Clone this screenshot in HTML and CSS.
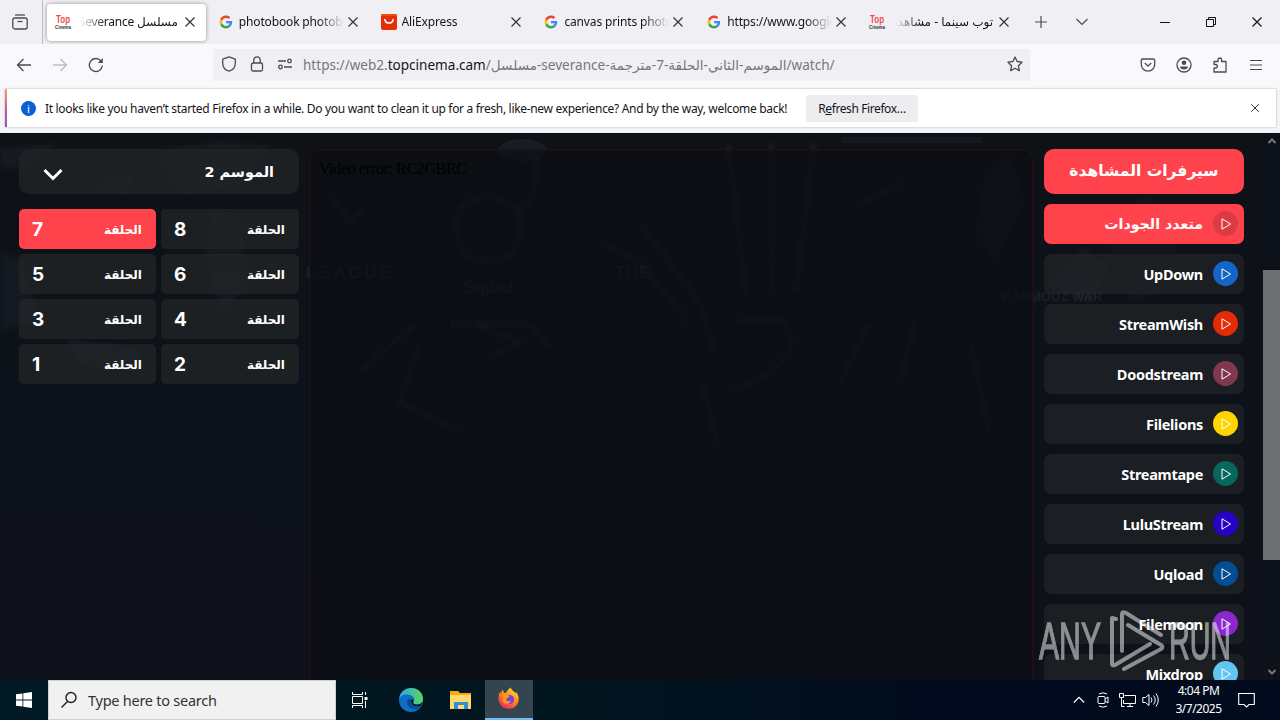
FILE: index.html
```html
<!DOCTYPE html>
<html lang="en">
<head>
    <meta charset="UTF-8">
    <meta name="viewport" content="width=device-width, initial-scale=1.0">
    <title>Top Cinema</title>
    <link rel="stylesheet" href="styles.css">
</head>
<body>

<!-- Shared icons -->
<svg class="sprite">
    <symbol id="close" viewBox="0 0 12 12"><path d="M1.5 1.5l9 9M10.5 1.5l-9 9" fill="none" stroke="currentColor" stroke-width="1.2"/></symbol>
    <symbol id="google" viewBox="0 0 48 48">
        <path fill="#4285f4" d="M45 24.5c0-1.6-.1-2.8-.4-4.1H24v7.5h12c-.2 2-1.500 5-4.500 7l6.800 5.300C42.500 36.500 45 31.100 45 24.500z"/>
        <path fill="#34a853" d="M24 46c5.900 0 10.900-2 14.500-5.300L31.600 35.300c-1.900 1.300-4.300 2.200-7.600 2.200-5.800 0-10.700-3.800-12.500-9.100l-7.100 5.500C8 41 15.400 46 24 46z"/>
        <path fill="#fbbc05" d="M11.500 28.400c-.5-1.400-.7-2.900-.7-4.400s.3-3 .7-4.400l-7.100-5.500C2.900 17 2 20.400 2 24s.9 7 2.400 9.900z"/>
        <path fill="#ea4335" d="M24 10.500c4.100 0 6.900 1.800 8.500 3.300l6.200-6C34.900 4.200 29.900 2 24 2 15.400 2 8 7 4.400 14.100l7.100 5.500c1.800-5.300 6.700-9.100 12.500-9.100z"/>
    </symbol>
    <symbol id="play" viewBox="0 0 12 12"><path d="M2 .8v10.400L10.500 6z" fill="none" stroke="#fff" stroke-width="1" stroke-linejoin="round"/></symbol>
</svg>

<!-- Tabs -->
<div class="tab-strip">
    <div class="recent">
        <svg width="16" height="16" fill="none" stroke="#4a4a52" stroke-width="1.3"><path d="M3 1h10"/><rect x=".8" y="4" width="14.400" height="11" rx="2"/><path d="M5.500 7.500h5"/></svg>
    </div>
    <div class="tab active">
        <svg class="fav top"><text class="t1" x="1" y="9" textLength="14" lengthAdjust="spacingAndGlyphs">Top</text><text class="t2" x="0" y="15" textLength="16" lengthAdjust="spacingAndGlyphs">Cinema</text></svg>
        <span class="title rtl" dir="rtl"><bdi>مسلسل</bdi> Severance</span>
        <svg class="x"><use href="#close"/></svg>
    </div>
    <div class="tab">
        <svg class="fav g"><use href="#google"/></svg>
        <span class="title">photobook photobook</span>
        <svg class="x"><use href="#close"/></svg>
    </div>
    <div class="tab">
        <svg class="fav" viewBox="0 0 16 16"><rect width="16" height="16" rx="2" fill="#e62e04"/><path d="M0 2q0-2 2-2h12q2 0 2 2z" fill="#f24a0a"/><path d="M3.800 5.500c1 4.800 7.400 4.800 8.400 0" fill="none" stroke="#fff" stroke-width="1.500" stroke-linecap="round"/></svg>
        <span class="title">AliExpress</span>
        <svg class="x"><use href="#close"/></svg>
    </div>
    <div class="tab">
        <svg class="fav g"><use href="#google"/></svg>
        <span class="title">canvas prints photobook</span>
        <svg class="x"><use href="#close"/></svg>
    </div>
    <div class="tab">
        <svg class="fav g"><use href="#google"/></svg>
        <span class="title">https://www.google.com</span>
        <svg class="x"><use href="#close"/></svg>
    </div>
    <div class="tab">
        <svg class="fav top"><text class="t1" x="1" y="9" textLength="14" lengthAdjust="spacingAndGlyphs">Top</text><text class="t2" x="0" y="15" textLength="16" lengthAdjust="spacingAndGlyphs">Cinema</text></svg>
        <span class="title rtl arabic" dir="rtl">توب سينما - مشاهدة</span>
        <svg class="x"><use href="#close"/></svg>
    </div>
    <div class="tab-tools">
        <svg width="14" height="14"><path d="M7 1v12M1 7h12" stroke="#4a4a52" stroke-width="1.200"/></svg>
        <svg width="14" height="14"><path d="M1.500 4l5.500 5.500L12.500 4" fill="none" stroke="#4a4a52" stroke-width="1.200"/></svg>
    </div>
    <div class="window-buttons">
        <svg width="12" height="12"><path d="M1 6.500h10" stroke="#111"/></svg>
        <svg width="12" height="12" fill="none" stroke="#111"><path d="M1.500 3.500h7v7h-7zM3.500 3.500v-2h7v7h-2"/></svg>
        <svg width="12" height="12" class="win-x"><use href="#close"/></svg>
    </div>
</div>

<!-- Toolbar -->
<div class="toolbar">
    <div class="nav-buttons">
        <svg width="16" height="16"><path d="M15 8H1.500M7.500 2l-6 6 6 6" fill="none" stroke="#4a4a52" stroke-width="1.300"/></svg>
        <svg width="16" height="16"><path d="M1 8h13.500M8.500 2l6 6-6 6" fill="none" stroke="#bcbcc2" stroke-width="1.300"/></svg>
        <svg width="16" height="16"><path d="M14.300 8.500A6.500 6.500 0 1 1 12.800 3.800L14 5" fill="none" stroke="#4a4a52" stroke-width="1.300"/><path d="M14.800 1v5H9.800z" fill="#4a4a52"/></svg>
    </div>
    <div class="url-bar">
        <svg width="16" height="16"><path d="M8 .8l6.300 2.400v4C14.300 11 11.500 14 8 15.200 4.500 14 1.700 11 1.700 7.200v-4z" fill="none" stroke="#4a4a52" stroke-width="1.300" stroke-linejoin="round"/></svg>
        <svg width="16" height="16" fill="none" stroke="#4a4a52" stroke-width="1.300"><rect x="2.500" y="7" width="11" height="8" rx="1.500"/><path d="M4.800 7V4a3.200 3.200 0 0 1 6.400 0v3"/></svg>
        <svg width="16" height="16" fill="none" stroke="#4a4a52" stroke-width="1.300"><path d="M1 5h8M7 11h8"/><circle cx="12.500" cy="5" r="1.800"/><circle cx="3.500" cy="11" r="1.800"/></svg>
        <span class="url">https://web2.<b>topcinema.cam</b>/<span class="path">مسلسل-severance-الموسم-الثاني-الحلقة-7-مترجمة/watch/</span></span>
        <svg class="star" width="16" height="16"><path d="M8 1l2.100 4.500 4.900.7-3.600 3.500.9 5L8 12.300l-4.300 2.400.9-5L1 6.200l4.900-.7z" fill="none" stroke="#4a4a52" stroke-width="1.300" stroke-linejoin="round"/></svg>
    </div>
    <div class="tool-icons">
        <svg width="16" height="16" fill="none" stroke="#4a4a52" stroke-width="1.300"><path d="M2.500 2h11a1.200 1.200 0 0 1 1.200 1.200V7.500a6.700 6.700 0 0 1-13.400 0V3.200A1.200 1.200 0 0 1 2.500 2zM4.800 6L8 9.200 11.200 6"/></svg>
        <svg width="16" height="16" fill="none" stroke="#4a4a52" stroke-width="1.300"><circle cx="8" cy="8" r="7"/><circle cx="8" cy="5.800" r="2.300" fill="#4a4a52" stroke="none"/><path d="M4 9.500h8c0 4-8 4-8 0z" fill="#4a4a52" stroke="none"/></svg>
        <svg width="16" height="16"><path d="M2 15V11h1.500c2.500 0 2.500-3.500 0-3.500H2V4.500h4V3c0-2.700 3.600-2.700 3.600 0v1.500H14V15z" fill="none" stroke="#4a4a52" stroke-width="1.300" stroke-linejoin="round"/></svg>
        <svg width="16" height="16"><path d="M2 3.500h12M2 8h12M2 12.500h12" stroke="#4a4a52" stroke-width="1.200"/></svg>
    </div>
</div>

<!-- Notification -->
<div class="notice-wrap">
    <div class="notice">
        <span class="info">i</span>
        <span class="notice-text">It looks like you haven’t started Firefox in a while. Do you want to clean it up for a fresh, like-new experience? And by the way, welcome back!</span>
        <span class="refresh">R<u>e</u>fresh Firefox…</span>
        <svg class="x notice-close"><use href="#close"/></svg>
    </div>
</div>

<!-- Page -->
<div class="page">
    <svg class="backdrop" viewBox="0 0 1263 547">
        <g class="soft" fill="#8590b0" opacity=".06">
            <path d="M0 15l60-5-40 25H0zM160 16l60-8 50 4-30 40-60 10z"/>
            <path d="M0 120l20 5 20 60-40 15zM215 75l25 15 10 60-30 30-15-60zM90 55l45-15-10 22z"/>
            <path d="M985 40l25-20 15 50-30 60-20-30zM1045 150l40-35 25 20-20 35zM65 205l70 10 10 25-65-8z"/>
            <path d="M1100 90l50-30 40 90-60 20z" opacity=".5"/>
        </g>
        <path d="M497 18c5-16 47-16 50 0-4 16-40 12-50 0z" fill="#8590b0" opacity=".09"/>
        <path d="M842 4h140v6H842zM450 187h80v8h-80z" fill="#8590b0" opacity=".06"/>
        <g class="soft" fill="none" stroke="#a4acbc" opacity=".09" stroke-width="4">
            <path d="M728 10l18 150M771 10v150M814 10l-18 150M738 188h45c20 30 0 50-50 70M360 240l55-50M535 25c0 40-2 40-18 55"/>
            <path d="M458 78q30-30 60 0 8 50-30 50-35 0-30-50zM640 90l60 80 15 50M600 110l40 20 50 60M840 250l30-60M900 250l15-60M970 210l20 90M702 250l15 60"/>
            <path d="M475 190l45 20-30 15M530 190l20 25M860 70l40-20M330 60l20 30 15-15M420 210l-20 60 60 30"/>
        </g>
        <g fill="#a8b0c0" opacity=".085" font-family="Liberation Sans" font-weight="700">
            <text x="306" y="145" font-size="17" textLength="85">LEAGUE</text>
            <text x="464" y="160" font-size="16">Squad</text>
            <text x="615" y="146" font-size="18">THE</text>
            <text x="1002" y="168" font-size="13">KARMOUZ WAR</text>
        </g>
    </svg>

    <div class="content">
        <aside class="episodes">
            <div class="season">
                <svg width="20" height="14"><path d="M1.500 2L10 10.500 18.500 2" fill="none" stroke="#fff" stroke-width="3"/></svg>
                <span dir="rtl">الموسم 2</span>
            </div>
            <div class="episode-list">
                <div class="episode current"><b>7</b><span>الحلقة</span></div>
                <div class="episode"><b>8</b><span>الحلقة</span></div>
                <div class="episode"><b>5</b><span>الحلقة</span></div>
                <div class="episode"><b>6</b><span>الحلقة</span></div>
                <div class="episode"><b>3</b><span>الحلقة</span></div>
                <div class="episode"><b>4</b><span>الحلقة</span></div>
                <div class="episode"><b>1</b><span>الحلقة</span></div>
                <div class="episode"><b>2</b><span>الحلقة</span></div>
            </div>
        </aside>

        <main class="player">Video error: RC2GBRC</main>

        <aside class="servers">
            <h2>سيرفرات المشاهدة</h2>
            <div class="server current"><span class="ar">متعدد الجودات</span><i class="dot"><svg><use href="#play"/></svg></i></div>
            <div class="server"><span>UpDown</span><i class="dot updown"><svg><use href="#play"/></svg></i></div>
            <div class="server"><span>StreamWish</span><i class="dot wish"><svg><use href="#play"/></svg></i></div>
            <div class="server"><span>Doodstream</span><i class="dot dood"><svg><use href="#play"/></svg></i></div>
            <div class="server"><span>Filelions</span><i class="dot lions"><svg><use href="#play"/></svg></i></div>
            <div class="server"><span>Streamtape</span><i class="dot tape"><svg><use href="#play"/></svg></i></div>
            <div class="server"><span>LuluStream</span><i class="dot lulu"><svg><use href="#play"/></svg></i></div>
            <div class="server"><span>Uqload</span><i class="dot uqload"><svg><use href="#play"/></svg></i></div>
            <div class="server"><span>Filemoon</span><i class="dot moon"><svg><use href="#play"/></svg></i></div>
            <div class="server"><span>Mixdrop</span><i class="dot mix"><svg><use href="#play"/></svg></i></div>
        </aside>
    </div>

    <div class="scrollbar">
        <svg width="10" height="8"><path d="M1.500 6L5 2.500 8.500 6" fill="none" stroke="#73767a" stroke-width="2"/></svg>
        <div class="thumb"></div>
        <svg width="10" height="8"><path d="M1.500 2L5 5.500 8.500 2" fill="none" stroke="#73767a" stroke-width="2"/></svg>
    </div>
</div>

<!-- Watermark -->
<svg class="watermark" width="194" height="64">
    <g fill="#fff" stroke="#fff" stroke-width="1.300" font-family="Liberation Sans Narrow, Liberation Sans" font-size="51">
        <text x="1" y="50" textLength="62" lengthAdjust="spacingAndGlyphs">ANY</text>
        <text x="131" y="50" textLength="62" lengthAdjust="spacingAndGlyphs">RUN</text>
    </g>
    <g fill="none" stroke="#fff" stroke-width="4" stroke-linejoin="round" stroke-linecap="round">
        <path d="M78 10l-4-1v46q0 2 3 1l35-21"/>
        <path d="M84 42V5q0-3 4-1l35 22M90 16l33 20q3 2 0 4L86 60"/>
    </g>
</svg>

<!-- Taskbar -->
<div class="taskbar">
    <div class="start"><svg width="16" height="16" fill="#fff"><path d="M0 2.300L6.500 1.400v6.100H0zM7.300 1.300L16 0v7.500H7.300zM0 8.400h6.500v6.200L0 13.700zM7.300 8.400H16V16l-8.700-1.300z"/></svg></div>
    <div class="search">
        <svg width="18" height="18"><path d="M1.500 16.500l6-6" stroke="#222" stroke-width="1.500"/><circle cx="11" cy="6.500" r="5" fill="none" stroke="#222" stroke-width="1.400"/></svg>
        <span>Type here to search</span>
    </div>
    <div class="app">
        <svg width="16" height="16" fill="none" stroke="#fff"><path d="M.5 0v2.500h10V0M.5 16v-2.500h10V16M.5 4.500h10v7H.5zM13.500 0v3M13.500 9v7"/><path d="M12.500 5h3v3h-3z" fill="#fff" stroke="none"/></svg>
    </div>
    <div class="app edge">
        <svg width="24" height="24" viewBox="0 0 24 24">
            <defs><linearGradient id="eg"><stop stop-color="#2ba7ea"/><stop offset="1" stop-color="#5bd75a"/></linearGradient></defs>
            <circle cx="12" cy="12" r="12" fill="#0e6fc4"/>
            <path d="M.2 11C1 4 6 0 12 0c7 0 12 5 12 10.500 0 4-3 6-6.500 6-3 0-4-1.500-3-3 2.500-4-2-7-6.500-7C4 6.500 1 8.500.2 11z" fill="url(#eg)"/>
            <path d="M9 11c-3 5 1 11 8 10 2 0 4-2 5-3-4 2-12 1-10-7z" fill="#0b4a94"/>
            <path d="M14.500 13.500c-1 1.500 0 3 3 3 2 0 4-.6 5.300-2L22 18c-5 1.500-11-.5-9.700-6.500 1-.5 2.800.5 2.200 2z" fill="#021b2a"/>
        </svg>
    </div>
    <div class="app">
        <svg width="22" height="20"><path d="M0 1h8l2 2h11v16H0z" fill="#f5a81c"/><path d="M0 5h21v14H0z" fill="#ffd96b"/><path d="M4 12h14v7h-4v-4H8v4H4z" fill="#2f8fd8"/></svg>
    </div>
    <div class="app running">
        <svg width="22" height="24" viewBox="0 0 24 25">
            <defs><linearGradient id="ff" x1=".8" y1="0" x2=".2" y2="1"><stop stop-color="#ffe83a"/><stop offset=".45" stop-color="#ff8a1c"/><stop offset="1" stop-color="#f0205f"/></linearGradient></defs>
            <path d="M14 0c1 4 4 4 5 6l1-1c3 4 3 8 2 11a11 11 0 0 1-21-1C0 10 1 6 3 4v3l2-5 2 4c3 0 3-4 7-6z" fill="url(#ff)"/>
            <circle cx="12.500" cy="13" r="5" fill="#7a42d6"/>
            <path d="M5 8c3-1 5 0 7 1 1 2-3 2-3 4s3 3 5 1c0 4-7 5-9 1z" fill="#ff9a1f"/>
        </svg>
    </div>
    <div class="tray">
        <svg width="12" height="16"><path d="M.8 10.500L6 5.300l5.200 5.200" fill="none" stroke="#fff" stroke-width="1.200"/></svg>
        <svg width="12" height="16" fill="none" stroke="#fff"><rect x="1" y="4.500" width="7" height="7" rx="1"/><path d="M8 7l3-2v6L8 9M2 2q4-2.500 8 0M2 14q4 2.500 8 0"/></svg>
        <svg width="17" height="16" fill="none" stroke="#fff"><path d="M5.500 3.500h11v8h-12V8M8 14.500h6M11 11.500v3M.5 1.500h4v4h-4zM2.500 5.500v9h3"/></svg>
        <svg width="17" height="16" fill="none" stroke="#fff"><path d="M.8 5.500h2.700L7 2.500v11l-3.500-3H.8zM9 5.500q2 2.500 0 5M11.500 3.500q3.500 4.500 0 9M14 1.500q4.500 6.500 0 13"/></svg>
        <div class="clock"><span>4:04 PM</span><span>3/7/2025</span></div>
        <svg width="17" height="16"><path d="M.7 1.500h15.600v11H11l-2.500 2.500L6 12.500H.7z" fill="none" stroke="#fff" stroke-width="1.100"/></svg>
    </div>
</div>

</body>
</html>
```
FILE: styles.css
```css
/* Global Styles */
* {
    box-sizing: border-box;
}

body {
    margin: 0;
    width: 1280px;
    height: 720px;
    overflow: hidden;
    display: flex;
    flex-direction: column;
    font-family: "Noto Sans", "DejaVu Sans", sans-serif;
    font-size: 12px;
    color: #15141a;
    background: #f9f9fb;
}

svg {
    flex: none;
}

.sprite {
    position: absolute;
    width: 0;
    height: 0;
}

/* Tabs */
.tab-strip {
    height: 44px;
    flex: none;
    display: flex;
    align-items: center;
    background: #f0f0f4;
}

.recent {
    width: 43px;
    height: 44px;
    padding: 14px 0 0 12px;
    border-right: 1px solid #bdbdc5;
    margin-right: 4px;
}

.tab {
    width: 159px;
    height: 37px;
    margin-right: 3.8px;
    padding-left: 8px;
    display: flex;
    align-items: center;
    border-radius: 4px;
    flex: none;
}

.tab.active {
    background: #fff;
    box-shadow: 0 0 4px rgba(0, 0, 0, 0.4);
}

.fav {
    width: 16px;
    height: 16px;
}

.fav.g {
    padding: 1px;
}

.fav.top {
    overflow: visible;
    font-family: "Liberation Sans", sans-serif;
    font-weight: 700;
}

.t1 {
    font-size: 11px;
    fill: #ee4b4f;
}

.t2 {
    font-size: 6px;
    fill: #333;
}

.title {
    width: 105px;
    margin: 0 3px 0 5px;
    white-space: nowrap;
    overflow: hidden;
    line-height: 18px;
    letter-spacing: -0.15px;
    -webkit-mask-image: linear-gradient(to left, transparent 0, #000 26px);
    mask-image: linear-gradient(to left, transparent 0, #000 26px);
}

.title.rtl {
    width: 98px;
    margin: 0 6px 0 9px;
    letter-spacing: -0.25px;
    -webkit-mask-image: linear-gradient(to right, transparent 0, #000 26px);
    mask-image: linear-gradient(to right, transparent 0, #000 26px);
}

.title.arabic {
    margin: 0 5px 0 10px;
    letter-spacing: 0;
}

.x {
    width: 12px;
    height: 12px;
    color: #333;
}

.tab-tools {
    display: flex;
    gap: 27px;
    margin-left: 10px;
}

.window-buttons {
    display: flex;
    gap: 34px;
    margin: 0 17px 0 auto;
}

/* Toolbar */
.toolbar {
    height: 44px;
    flex: none;
    display: flex;
    align-items: center;
    padding: 0 16px;
    background: #f9f9fb;
}

.nav-buttons {
    display: flex;
    gap: 20px;
    width: 197px;
    margin-top: -2px;
}

.url-bar {
    width: 817px;
    height: 32px;
    margin-top: -3px;
    padding: 0 7px 0 8px;
    display: flex;
    align-items: center;
    gap: 12px;
    background: #f0f0f4;
}

.url-bar svg {
    margin-top: -2px;
}

.url {
    color: #77767d;
    font-size: 13.55px;
    margin-left: -2px;
    white-space: nowrap;
}

.url b {
    font-weight: 400;
    color: #15141a;
}

.url-bar .star {
    margin-left: auto;
}

.tool-icons {
    display: flex;
    gap: 20px;
    margin: -3px 0 0 auto;
}

/* Notification */
.notice-wrap {
    height: 45px;
    flex: none;
    padding: 1px 4px 5px 5px;
    background: #f4f5f8;
    border-bottom: 1px solid #e6edf3;
}

.notice {
    height: 38px;
    display: flex;
    align-items: center;
    padding: 0 16px 0 14px;
    background: #fff;
    border-left: 2px solid #b55fa5;
    border-image: linear-gradient(#f9a46c, #d8578c, #8457b8) 1;
    box-shadow: 0 0 2px rgba(0, 0, 0, 0.3);
}

.info {
    width: 15px;
    height: 15px;
    border-radius: 50%;
    background: #0a5fd8;
    color: #fff;
    font-size: 11px;
    line-height: 15px;
    text-align: center;
}

.notice-text {
    width: 743px;
    margin: 0 18px 0 9px;
    white-space: nowrap;
    letter-spacing: -0.32px;
}

.refresh {
    width: 112px;
    height: 27px;
    line-height: 27px;
    background: #ededf0;
    border-radius: 3px;
    text-align: center;
    letter-spacing: -0.4px;
}

.notice-close {
    width: 10px;
    margin-left: auto;
}

/* Page */
.page {
    position: relative;
    height: 547px;
    flex: none;
    display: flex;
    overflow: hidden;
    background: linear-gradient(#0e1217, #0d111a 60%, #0e1119);
}

.backdrop {
    position: absolute;
    top: 0;
    left: 0;
    width: 1263px;
    height: 547px;
}

.soft {
    filter: blur(2px);
}

.content {
    position: relative;
    width: 1263px;
    padding: 16px 19px 0;
    display: flex;
}

.episodes {
    width: 280px;
    color: #fff;
    font-family: "DejaVu Sans", sans-serif;
    font-weight: 700;
}

.season {
    height: 45px;
    padding: 0 25px 0 24px;
    display: flex;
    align-items: center;
    justify-content: space-between;
    background: rgba(35, 38, 40, 0.7);
    border-radius: 10px;
    font-size: 14.4px;
}

.season svg {
    margin-top: 6px;
}

.episode-list {
    margin-top: 15px;
    display: grid;
    grid-template-columns: 137px 138px;
    gap: 5px;
}

.episode {
    height: 40px;
    padding: 1px 14px 0 13px;
    display: flex;
    align-items: center;
    justify-content: space-between;
    background: rgba(35, 38, 40, 0.7);
    border-radius: 5px;
    font-size: 12px;
}

.episode b {
    font-family: Inter, sans-serif;
    font-size: 19px;
    font-weight: 700;
}

.episode.current {
    background: #ff434c;
}

.player {
    width: 725px;
    height: 620px;
    margin: 0 10px 0 10px;
    padding: 9px 8px;
    border: 2px solid rgba(70, 18, 28, 0.35);
    border-radius: 10px 10px 0 0;
    background: rgba(10, 14, 16, 0.6);
    color: #000;
    font-family: "Liberation Serif", serif;
    font-size: 16px;
    line-height: 18px;
    letter-spacing: -0.35px;
}

.servers {
    width: 200px;
    color: #fff;
}

.servers h2 {
    height: 45px;
    margin: 0 0 10px;
    border-radius: 10px;
    background: #ff434c;
    font-family: "DejaVu Sans", sans-serif;
    font-size: 15.5px;
    line-height: 44px;
    text-align: center;
}

.server {
    height: 40px;
    margin-bottom: 10px;
    padding: 0 6px 1px 0;
    display: flex;
    align-items: center;
    justify-content: flex-end;
    gap: 10px;
    border-radius: 7px;
    background: rgba(35, 38, 40, 0.65);
    font-size: 14.5px;
    font-weight: 700;
    letter-spacing: -0.3px;
}

.server.current {
    background: #ff434c;
}

.server .ar {
    font-family: "DejaVu Sans", sans-serif;
    font-size: 14.2px;
    letter-spacing: 0;
}

.dot {
    width: 25px;
    height: 25px;
    border-radius: 50%;
    display: flex;
    align-items: center;
    justify-content: center;
    background: #dc3b44;
}

.dot svg {
    width: 12px;
    height: 12px;
}

.updown { background: #1565c8; }
.wish { background: #e52b05; }
.dood { background: #80384f; }
.lions { background: #ffd500; }
.tape { background: #07675f; }
.lulu { background: #2603c4; }
.uqload { background: #034d91; }
.moon { background: #8c27cf; }
.mix { background: #62c5f4; }

.scrollbar {
    position: relative;
    width: 17px;
    display: flex;
    flex-direction: column;
    align-items: center;
    padding: 4px 0;
    background: #0d1119;
}

.thumb {
    width: 17px;
    height: 290px;
    margin: 125px 0 auto;
    background: #6e7174;
}

/* Watermark */
.watermark {
    position: absolute;
    left: 1038px;
    top: 609px;
    opacity: 0.5;
}

/* Taskbar */
.taskbar {
    height: 40px;
    flex: none;
    display: flex;
    background: linear-gradient(to right, #011a23, #01151f 45%, #010a1d 75%, #020b1e);
    color: #fff;
}

.start {
    width: 48px;
    padding: 12px 16px;
}

.search {
    width: 288px;
    padding-left: 11px;
    display: flex;
    align-items: center;
    gap: 10px;
    background: #f1f1f1;
    border: 1px solid #d0d0d0;
    color: #333;
    font-size: 14.5px;
    letter-spacing: -0.25px;
}

.app {
    width: 48px;
    display: flex;
    align-items: center;
    justify-content: center;
}

.app.edge {
    width: 53px;
}

.app.running {
    background: #33454f;
    border-bottom: 2px solid #76b9ed;
}

.tray {
    margin-left: auto;
    display: flex;
    align-items: center;
    padding-right: 25px;
    gap: 12px;
}

.tray svg:nth-child(3) {
    margin-left: -2px;
}

.tray svg:nth-child(4) {
    margin-left: -6px;
}

.clock {
    width: 55px;
    display: flex;
    flex-direction: column;
    text-align: center;
    line-height: 18px;
    letter-spacing: -0.5px;
}
```
